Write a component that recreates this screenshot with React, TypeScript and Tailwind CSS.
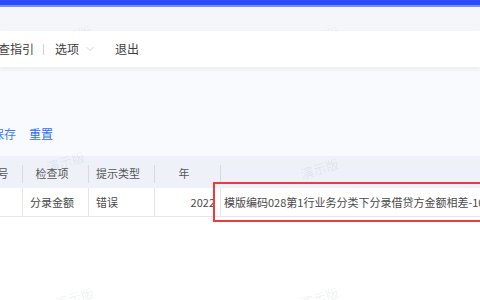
import { ChevronDown } from "lucide-react";

const font = { fontFamily: "'Noto Sans CJK SC', 'Noto Sans', sans-serif" };

function Watermark({ className }: { className: string }) {
  return (
    <div
      className={`pointer-events-none absolute -rotate-[16deg] text-[13px] leading-none whitespace-nowrap text-[rgba(60,70,90,0.09)] ${className}`}
    >
      演示版
    </div>
  );
}

export default function App() {
  return (
    <div
      className="relative w-[480px] h-[300px] overflow-hidden bg-white text-[#444]"
      style={font}
    >
      {/* top bar */}
      <div className="h-[7px] bg-[#2a4bfd] border-b-2 border-[#7690ff]" />
      <div className="h-[24px] bg-[#f5f6fa]" />

      {/* toolbar */}
      <div className="relative z-10 h-[36px] bg-white shadow-[0_2px_4px_rgba(30,40,80,0.07)] flex items-center text-[12px] text-[#3d3d3d]">
        <span className="ml-[-14px] shrink-0">检查指引</span>
        <span className="ml-[9px] w-px h-[11px] bg-[#cfd2d8] shrink-0" />
        <span className="ml-[11px] shrink-0">选项</span>
        <ChevronDown className="ml-[5px] w-[12px] h-[12px] text-[#b5b9c3] shrink-0" strokeWidth={1.3} />
        <span className="ml-[19px] shrink-0">退出</span>
      </div>

      {/* filter area */}
      <div className="h-[89px] bg-[#f9fafd] flex flex-col justify-end">
        <div className="flex items-center text-[12px] text-[#3b7cf6] mb-[13px]">
          <span className="ml-[-8px] shrink-0">保存</span>
          <span className="ml-[13px] text-[#2f6ef2] shrink-0">重置</span>
        </div>
      </div>

      {/* table */}
      <div className="relative text-[11px]">
        <div className="h-[32px] bg-[#eef1f7] flex ml-[-20px] text-[#555]">
          <div className="w-[43px] shrink-0 relative flex items-center justify-center pr-2 pt-[3px]">
            序号
            <span className="absolute right-0 top-[9px] h-[18px] w-px bg-[#d6dae2]" />
          </div>
          <div className="w-[66px] shrink-0 relative flex items-center justify-center pr-2 pt-[3px]">
            检查项
            <span className="absolute right-0 top-[9px] h-[18px] w-px bg-[#d6dae2]" />
          </div>
          <div className="w-[66px] shrink-0 relative flex items-center justify-center pr-2 pt-[3px]">
            提示类型
            <span className="absolute right-0 top-[9px] h-[18px] w-px bg-[#d6dae2]" />
          </div>
          <div className="w-[66px] shrink-0 relative flex items-center justify-center pr-2 pt-[3px]">
            年
            <span className="absolute right-0 top-[9px] h-[18px] w-px bg-[#d6dae2]" />
          </div>
          <div className="flex-1" />
        </div>
        <div className="h-[29px] flex ml-[-20px] border-b border-[#e4e6eb] text-[#4a4a4a]">
          <div className="w-[43px] shrink-0 border-r border-[#e4e6eb]" />
          <div className="w-[66px] shrink-0 border-r border-[#e4e6eb] flex items-center pl-[7px]">分录金额</div>
          <div className="w-[66px] shrink-0 border-r border-[#e4e6eb] flex items-center pl-[7px]">错误</div>
          <div className="w-[66px] shrink-0 border-r border-[#e4e6eb] flex items-center justify-end pr-[5px]">2022</div>
          <div className="flex-1 min-w-0 flex items-center pl-[3px] whitespace-nowrap">
            模版编码028第1行业务分类下分录借贷方金额相差-10.00
          </div>
        </div>
        {/* highlight box */}
        <div className="absolute left-[213px] top-[26px] w-[300px] h-[40px] border-2 border-[#f0393b]" />
      </div>

      <Watermark className="left-[53px] top-[29px]" />
      <Watermark className="left-[300px] top-[30px]" />
      <Watermark className="left-[46px] top-[155px]" />
      <Watermark className="left-[300px] top-[162px]" />
      <Watermark className="left-[55px] top-[291px]" />
      <Watermark className="left-[300px] top-[291px]" />
    </div>
  );
}
